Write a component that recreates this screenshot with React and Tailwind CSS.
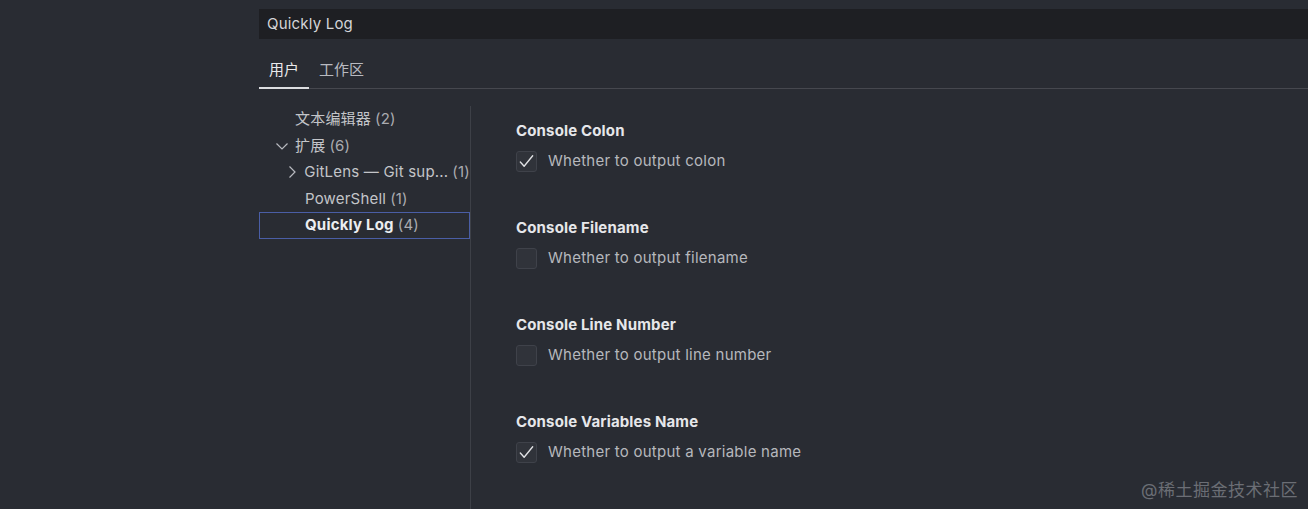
import React from "react";

const font = { fontFamily: '"Inter", "Noto Sans CJK SC", sans-serif' };

function Check() {
  return (
    <svg width="20" height="20" viewBox="0 0 20 20" className="block">
      <path d="M3.5 11 L7.5 15.5 L16.5 4.5" fill="none" stroke="#e2e3e6" strokeWidth="1.4" strokeLinecap="round" strokeLinejoin="round" />
    </svg>
  );
}

function ChevronDown() {
  return (
    <svg width="14" height="14" viewBox="0 0 14 14" className="block">
      <path d="M1.5 4.5 L7 10 L12.5 4.5" fill="none" stroke="#b8bac0" strokeWidth="1.2" />
    </svg>
  );
}

function ChevronRight() {
  return (
    <svg width="14" height="14" viewBox="0 0 14 14" className="block">
      <path d="M4.5 1.5 L10 7 L4.5 12.5" fill="none" stroke="#b8bac0" strokeWidth="1.2" />
    </svg>
  );
}

const settings = [
  { title: "Console Colon", desc: "Whether to output colon", checked: true },
  { title: "Console Filename", desc: "Whether to output filename", checked: false },
  { title: "Console Line Number", desc: "Whether to output line number", checked: false },
  { title: "Console Variables Name", desc: "Whether to output a variable name", checked: true },
];

export default function App() {
  return (
    <div className="w-[1308px] h-[509px] bg-[#292c33] flex overflow-hidden relative" style={font}>
      <div className="w-[259px] shrink-0" />
      <div className="flex-1 flex flex-col">
        <div className="mt-[9px] h-[31px] bg-[#1e1f23] flex items-center pl-[8px] text-[15px] text-[#d4d5d8] tracking-[0.2px]">
          Quickly Log
        </div>
        <div className="mt-[17px] flex border-b border-[#46484f] h-[34px]">
          <div className="w-[50px] flex justify-center pt-[3px] text-[15px] text-[#e8e9eb] border-b-2 border-[#dcdde0] -mb-[1px]">
            用户
          </div>
          <div className="ml-[10px] pt-[3px] text-[15px] text-[#b8bac0]">工作区</div>
        </div>
        <div className="flex flex-1 mt-[17px]">
          <div className="w-[211px] shrink-0 text-[15px] text-[#c3c5c9] tracking-[0.2px]">
            <div className="h-[26.5px] flex items-center pl-[36px]">
              文本编辑器 <span className="ml-[4px] text-[#a9abb0]">(2)</span>
            </div>
            <div className="h-[26.5px] flex items-center pl-[16px]">
              <span className="w-[20px] flex"><ChevronDown /></span>
              扩展 <span className="ml-[4px] text-[#a9abb0]">(6)</span>
            </div>
            <div className="h-[26.5px] flex items-center pl-[26px] whitespace-nowrap">
              <span className="w-[20px] flex"><ChevronRight /></span>
              GitLens — Git sup... <span className="ml-[4px] text-[#a9abb0]">(1)</span>
            </div>
            <div className="h-[26.5px] flex items-center pl-[46px]">
              PowerShell <span className="ml-[4px] text-[#a9abb0]">(1)</span>
            </div>
            <div className="h-[26.5px] flex items-center pl-[45px] border border-[#4a5ea6]">
              <span className="font-bold text-[#eceef0]">Quickly Log</span>
              <span className="ml-[4px] text-[#a9abb0]">(4)</span>
            </div>
          </div>
          <div className="w-px bg-[#3d4047]" />
          <div className="flex-1 pl-[45px] pt-[15px]">
            {settings.map((s) => (
              <div key={s.title} className="h-[97px]">
                <div className="text-[15px] font-bold text-[#e6e7ea] leading-[20px] tracking-[0.15px]">{s.title}</div>
                <div className="mt-[9px] flex items-center">
                  <div className="w-[21px] h-[21px] rounded-[3px] bg-[#30333a] border border-[#3f424a] flex items-center justify-center">
                    {s.checked && <Check />}
                  </div>
                  <div className="ml-[11px] text-[15px] text-[#b6b8bd] tracking-[0.25px]">{s.desc}</div>
                </div>
              </div>
            ))}
          </div>
        </div>
      </div>
      <div className="absolute right-[10px] bottom-[6px] text-[17px] text-[#6b6e75] tracking-[0.5px]">@稀土掘金技术社区</div>
    </div>
  );
}
